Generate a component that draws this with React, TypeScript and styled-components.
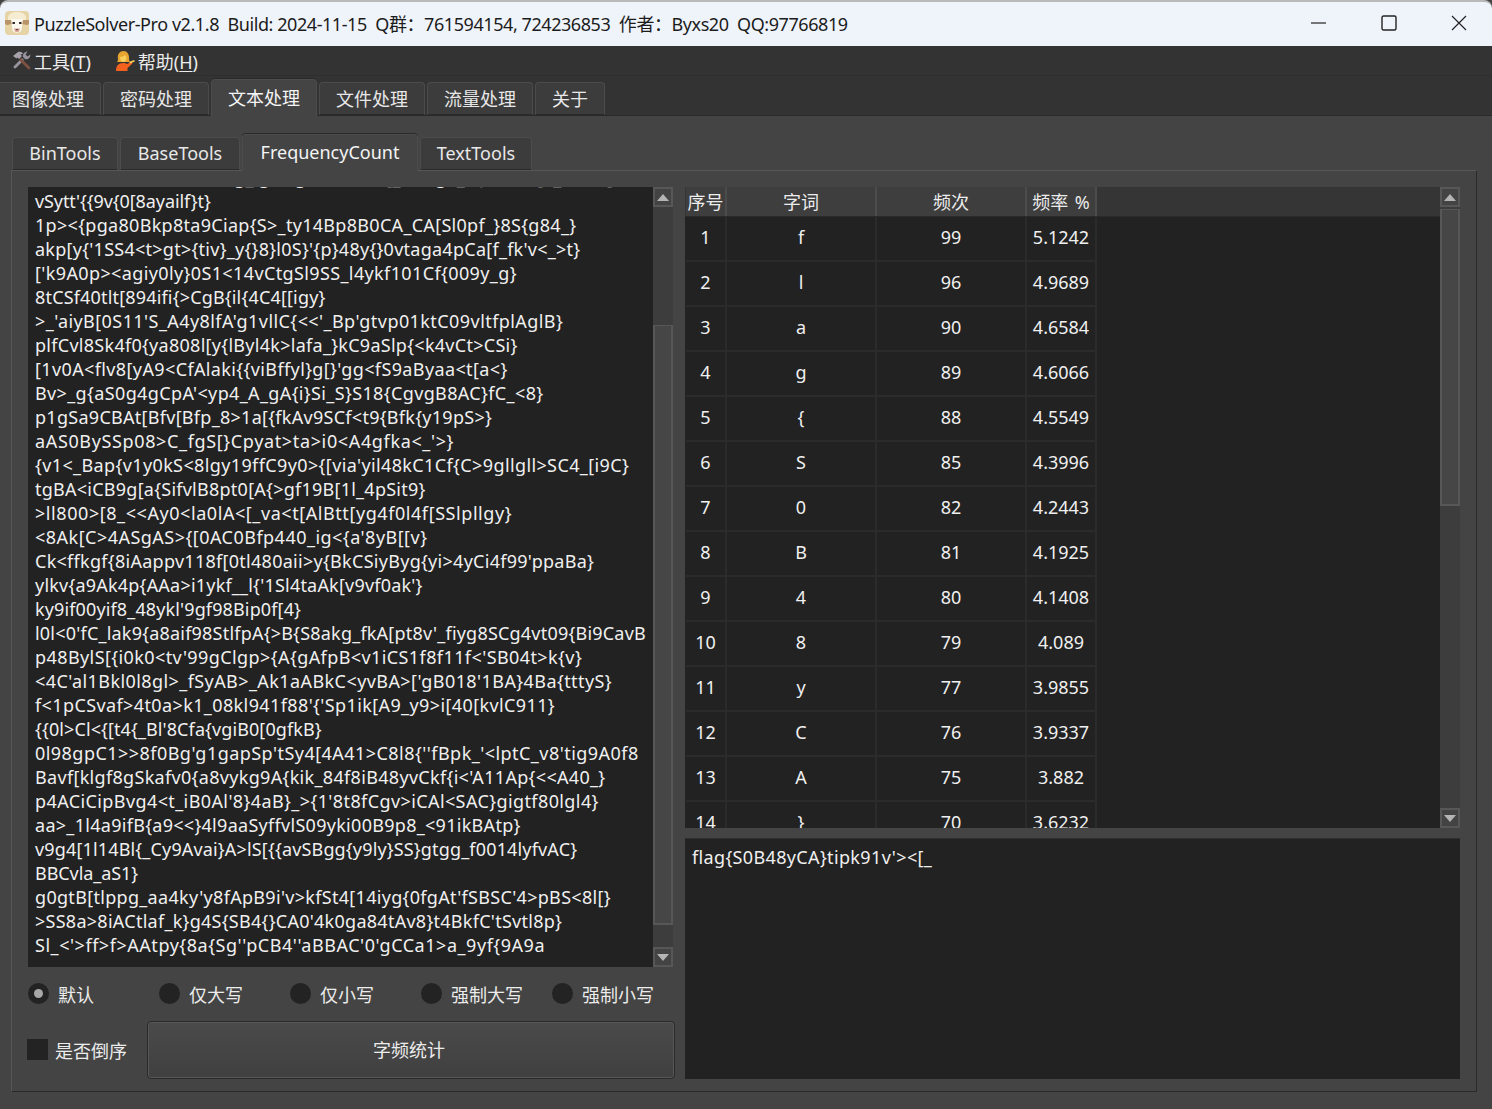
import React from "react";
import styled, { createGlobalStyle } from "styled-components";

const GlobalStyle = createGlobalStyle`
  html, body, #root {
    margin: 0;
    padding: 0;
    height: 100%;
    background: #444;
  }
  body {
    font-family: "Noto Sans", "Noto Sans CJK SC", sans-serif;
    font-size: 18px;
    color: #ececec;
  }
  * {
    box-sizing: border-box;
  }
`;

const Window = styled.div`
  width: 1492px;
  height: 1109px;
  display: flex;
  flex-direction: column;
  overflow: hidden;
  background: #444;
`;

const TitleBar = styled.div`
  height: 46px;
  flex: none;
  display: flex;
  align-items: center;
  padding: 0 25px 2px 5px;
  background: #eff4fb;
  border-top: 2px solid #b9b9b9;
  border-radius: 8px 8px 0 0;
  color: #1c1c1c;
`;

const TitleText = styled.span`
  margin-left: 5px;
  white-space: pre;
  letter-spacing: -0.43px;
  flex: 1;
`;

const WindowButtons = styled.div`
  display: flex;
  gap: 54px;
`;

const WindowButton = styled.button`
  width: 16px;
  height: 16px;
  border: 0;
  padding: 0;
  background: transparent;
  display: flex;
`;

const MenuBar = styled.div`
  height: 30px;
  flex: none;
  display: flex;
  align-items: center;
  gap: 25px;
  padding: 0 0 0 12px;
  background: #333;
  border-bottom: 1px solid #2f2f2f;
`;

const MenuItem = styled.div`
  display: flex;
  align-items: center;
  gap: 3px;
  white-space: nowrap;
  u {
    text-underline-offset: 2px;
  }
`;

const TabRow = styled.div<{ $height: number; $bg: string; $pad: number }>`
  height: ${(p) => p.$height}px;
  flex: none;
  display: flex;
  align-items: flex-end;
  gap: 2px;
  margin-left: ${(p) => p.$pad}px;
  background: ${(p) => p.$bg};
`;

const Tab = styled.div<{ $width: number; $active?: boolean; $tall: number; $short: number }>`
  width: ${(p) => p.$width}px;
  height: ${(p) => (p.$active ? p.$tall : p.$short)}px;
  flex: none;
  display: flex;
  align-items: center;
  justify-content: center;
  padding-bottom: 2px;
  margin-bottom: ${(p) => (p.$active ? -1 : 0)}px;
  position: relative;
  background: ${(p) => (p.$active ? "#444" : "#3c3c3c")};
  color: ${(p) => (p.$active ? "#f4f4f4" : "#e8e8e8")};
  border: 1px solid #4c4c4c;
  border-bottom: ${(p) => (p.$active ? "0" : "1px solid #2a2a2a")};
  border-radius: 4px 4px 0 0;
  box-shadow: ${(p) => (p.$active ? "0 -1px 0 #2a2a2a" : "none")};
  white-space: nowrap;
`;

const OuterPane = styled.div`
  flex: 1;
  display: flex;
  flex-direction: column;
  padding: 17px 15px 17px 11px;
  background: #444;
  border-top: 1px solid #2a2a2a;
`;

const InnerPane = styled.div`
  flex: 1;
  display: flex;
  gap: 10px;
  padding: 16px 16px 12px 16px;
  background: #444;
  border: 1px solid #575757;
  border-right-color: #2a2a2a;
  border-bottom-color: #2a2a2a;
  min-height: 0;
`;

const LeftColumn = styled.div`
  width: 647px;
  flex: none;
  display: flex;
  flex-direction: column;
`;

const RightColumn = styled.div`
  flex: 1;
  display: flex;
  flex-direction: column;
  gap: 10px;
  min-width: 0;
`;

const TextPanel = styled.div`
  height: 780px;
  flex: none;
  width: 645px;
  display: flex;
  background: #222;
`;

const TextBody = styled.div`
  flex: 1;
  min-width: 0;
  overflow: hidden;
  padding-left: 7px;
`;

const TextLines = styled.div`
  margin-top: -22px;
  line-height: 24px;
  color: #f0f0f0;
`;

const TextLine = styled.div<{ $spacing: number }>`
  height: 24px;
  white-space: pre;
  letter-spacing: ${(p) => p.$spacing}px;
`;

const ScrollBar = styled.div`
  width: 20px;
  flex: none;
  display: flex;
  flex-direction: column;
  gap: 1px;
  background: #3d3d3d;
`;

const ArrowButton = styled.div`
  height: 20px;
  flex: none;
  display: flex;
  align-items: center;
  justify-content: center;
  background: #434343;
  border: 2px solid #575757;
`;

const Track = styled.div`
  flex: 1;
  min-height: 0;
`;

const Thumb = styled.div<{ $top: number; $height: number }>`
  margin-top: ${(p) => p.$top}px;
  height: ${(p) => p.$height}px;
  background: #464646;
  border: 2px solid #575757;
  border-top-width: 1px;
`;

const OptionRow = styled.div`
  height: 54px;
  flex: none;
  display: grid;
  grid-template-columns: repeat(5, 131px);
  align-items: center;
  padding-bottom: 1px;
`;

const Option = styled.div`
  display: flex;
  align-items: center;
  gap: 8px;
  white-space: nowrap;
`;

const Radio = styled.span<{ $checked?: boolean }>`
  width: 21px;
  height: 21px;
  flex: none;
  margin-right: 1px;
  display: flex;
  align-items: center;
  justify-content: center;
  border-radius: 50%;
  background: #232323;
  &::after {
    content: "";
    width: 9px;
    height: 9px;
    border-radius: 50%;
    background: ${(p) => (p.$checked ? "#a8a8a8" : "transparent")};
  }
`;

const ActionRow = styled.div`
  flex: 1;
  display: flex;
  align-items: stretch;
  gap: 19px;
  margin-left: -1px;
`;

const CheckOption = styled.div`
  display: flex;
  align-items: center;
  gap: 7px;
  padding-bottom: 1px;
  white-space: nowrap;
  width: 101px;
  flex: none;
`;

const CheckBox = styled.span`
  width: 21px;
  height: 21px;
  flex: none;
  background: #232323;
`;

const ActionButton = styled.button`
  flex: 1;
  font: inherit;
  color: #ececec;
  padding: 0 4px 2px 0;
  background: linear-gradient(#4a4a4a, #404040);
  border: 1px solid #2a2a2a;
  border-radius: 4px;
  box-shadow: inset 0 0 0 1px #575757;
`;

const TableFrame = styled.div`
  height: 641px;
  flex: none;
  display: flex;
  background: #222;
`;

const TableBody = styled.div`
  flex: 1;
  min-width: 0;
  overflow: hidden;
  padding-left: 1px;
`;

const HeaderRow = styled.div`
  height: 30px;
  margin-left: -1px;
  padding-left: 1px;
  display: flex;
  background: #353535;
  border-bottom: 1px solid #2a2a2a;
`;

const HeaderCell = styled.div<{ $width: number }>`
  width: ${(p) => p.$width}px;
  flex: none;
  display: flex;
  align-items: center;
  justify-content: center;
  padding-bottom: 2px;
  background: #3e3e3e;
  border-right: 2px solid #4c4c4c;
  white-space: nowrap;
  word-spacing: 2px;
`;

const DataRow = styled.div`
  height: 45px;
  width: 411px;
  display: flex;
  border-bottom: 2px solid #2b2b2b;
`;

const DataCell = styled.div<{ $width: number }>`
  width: ${(p) => p.$width}px;
  flex: none;
  display: flex;
  align-items: center;
  justify-content: center;
  padding-bottom: 4px;
  border-right: 2px solid #2b2b2b;
  color: #f0f0f0;
`;

const ResultBox = styled.div`
  flex: 1;
  padding: 6px 7px;
  background: #222;
  border-top: 1px solid #2e2e2e;
  color: #f0f0f0;
  white-space: pre;
  letter-spacing: 0.35px;
`;

// the reference font has wider symbols, so each line carries its own tracking
const textLines: [string, number][] = [
  ["                                        g_ g     g                [_       g  _   }          [  _         [", 0.3],
  ["vSytt'{{9v{0[8ayailf}t}", -0.09],
  ["1p><{pga80Bkp8ta9Ciap{S>_ty14Bp8B0CA_CA[Sl0pf_}8S{g84_}", 0.3],
  ["akp[y{'1SS4<t>gt>{tiv}_y{}8}l0S}'{p}48y{}0vtaga4pCa[f_fk'v<_>t}", 0.26],
  ["['k9A0p><agiy0ly}0S1<14vCtgSl9SS_l4ykf101Cf{009y_g}", 0.38],
  ["8tCSf40tlt[894ifi{>CgB{il{4C4[[igy}", 0.17],
  [">_'aiyB[0S11'S_A4y8lfA'g1vllC{<<'_Bp'gtvp01ktC09vltfplAglB}", 0.43],
  ["plfCvl8Sk4f0{ya808l[y{lByl4k>lafa_}kC9aSlp{<k4vCt>CSi}", 0.28],
  ["[1v0A<flv8[yA9<CfAlaki{{viBffyl}g[}'gg<fS9aByaa<t[a<}", 0.38],
  ["Bv>_g{aS0g4gCpA'<yp4_A_gA{i}Si_S}S18{CgvgB8AC}fC_<8}", 0.37],
  ["p1gSa9CBAt[Bfv[Bfp_8>1a[{fkAv9SCf<t9{Bfk{y19pS>}", 0.28],
  ["aAS0BySSp08>C_fgS[}Cpyat>ta>i0<A4gfka<_'>}", 0.64],
  ["{v1<_Bap{v1y0kS<8lgy19ffC9y0>{[via'yil48kC1Cf{C>9gllgll>SC4_[i9C}", 0.38],
  ["tgBA<iCB9g[a{SifvlB8pt0[A{>gf19B[1l_4pSit9}", 0.25],
  [">ll800>[8_<<Ay0<la0lA<[_va<t[AlBtt[yg4f0l4f[SSlpllgy}", 0.57],
  ["<8Ak[C>4ASgAS>{[0AC0Bfp440_ig<{a'8yB[[v}", 0.48],
  ["Ck<ffkgf{8iAappv118f[0tl480aii>y{BkCSiyByg{yi>4yCi4f99'ppaBa}", 0.28],
  ["ylkv{a9Ak4p{AAa>i1ykf__l{'1Sl4taAk[v9vf0ak'}", 0.21],
  ["ky9if00yif8_48ykl'9gf98Bip0f[4}", 0.13],
  ["l0l<0'fC_lak9{a8aif98StlfpA{>B{S8akg_fkA[pt8v'_fiyg8SCg4vt09{Bi9CavB", 0.21],
  ["p48BylS[{i0k0<tv'99gClgp>{A{gAfpB<v1iCS1f8f11f<'SB04t>k{v}", 0.41],
  ["<4C'al1Bkl0l8gl>_fSyAB>_Ak1aABkC<yvBA>['gB018'1BA}4Ba{tttyS}", 0.42],
  ["f<1pCSvaf>4t0a>k1_08kl941f88'{'Sp1ik[A9_y9>i[40[kvlC911}", 0.39],
  ["{{0l>Cl<{[t4{_Bl'8Cfa{vgiB0[0gfkB}", 0.1],
  ["0l98gpC1>>8f0Bg'g1gapSp'tSy4[4A41>C8l8{''fBpk_'<lptC_v8'tig9A0f8", 0.46],
  ["Bavf[klgf8gSkafv0{a8vykg9A{kik_84f8iB48yvCkf{i<'A11Ap{<<A40_}", 0.32],
  ["p4ACiCipBvg4<t_iB0Al'8}4aB}_>{1'8t8fCgv>iCAl<SAC}gigtf80lgl4}", 0.4],
  ["aa>_1l4a9ifB{a9<<}4l9aaSyffvlS09yki00B9p8_<91ikBAtp}", 0.29],
  ["v9g4[1l14Bl{_Cy9Avai}A>lS[{{avSBgg{y9ly}SS}gtgg_f0014lyfvAC}", 0.16],
  ["BBCvla_aS1}", -0.07],
  ["g0gtB[tlppg_aa4ky'y8fApB9i'v>kfSt4[14iyg{0fgAt'fSBSC'4>pBS<8l[}", 0.31],
  [">SS8a>8iACtlaf_k}g4S{SB4{}CA0'4k0ga84tAv8}t4BkfC'tSvtl8p}", 0.27],
  ["Sl_<'>ff>f>AAtpy{8a{Sg''pCB4''aBBAC'0'gCCa1>a_9yf{9A9a", 0.54],
];

const rows = [
  ["1", "f", "99", "5.1242"],
  ["2", "l", "96", "4.9689"],
  ["3", "a", "90", "4.6584"],
  ["4", "g", "89", "4.6066"],
  ["5", "{", "88", "4.5549"],
  ["6", "S", "85", "4.3996"],
  ["7", "0", "82", "4.2443"],
  ["8", "B", "81", "4.1925"],
  ["9", "4", "80", "4.1408"],
  ["10", "8", "79", "4.089"],
  ["11", "y", "77", "3.9855"],
  ["12", "C", "76", "3.9337"],
  ["13", "A", "75", "3.882"],
  ["14", "}", "70", "3.6232"],
];

const columns = [
  { title: "序号", width: 41 },
  { title: "字词", width: 150 },
  { title: "频次", width: 150 },
  { title: "频率 %", width: 70 },
];

const mainTabs = [
  { label: "图像处理", width: 106 },
  { label: "密码处理", width: 106 },
  { label: "文本处理", width: 106, active: true },
  { label: "文件处理", width: 106 },
  { label: "流量处理", width: 106 },
  { label: "关于", width: 70 },
];

const toolTabs = [
  { label: "BinTools", width: 106 },
  { label: "BaseTools", width: 120 },
  { label: "FrequencyCount", width: 176, active: true },
  { label: "TextTools", width: 112 },
];

const options = ["默认", "仅大写", "仅小写", "强制大写", "强制小写"];

function SheepLogo() {
  return (
    <svg width="24" height="24" viewBox="0 0 24 24">
      <rect width="24" height="24" rx="4" fill="#e6d3a6" />
      <path d="M3 7c0-4 4-6 9-6s9 2 9 6v3H3z" fill="#f5ecd2" />
      <path d="M0 9l7 0 0 4-5 1c-1 0-2-1-2-2zM24 9l-7 0 0 4 5 1c1 0 2-1 2-2z" fill="#b89468" />
      <path d="M6 8h12l-1.500 11c-.5 3.500-8.500 3.500-9 0z" fill="#fbf8ef" />
      <rect x="7.500" y="11" width="2.400" height="2" fill="#2d2520" />
      <rect x="14.100" y="11" width="2.400" height="2" fill="#2d2520" />
      <path d="M9 17.500h6l-1 3c-1 .8-3 .8-4 0z" fill="#d9a596" />
      <path d="M10.500 18h3l-1.500 1.500z" fill="#5b3a33" />
    </svg>
  );
}

function ToolsIcon() {
  return (
    <svg width="19" height="19" viewBox="0 0 19 19">
      <path d="M2 15l8-8 2 2-8 8c-.6.6-1.400.6-2 0s-.6-1.400 0-2z" fill="#9a949e" />
      <path d="M11 6c-.5-2.500 1-5 4.500-5.500l-2 3 2 2 3-2c0 3.500-3 5.500-5.500 4.500z" fill="#9a949e" />
      <path d="M7 9l2-2 9 9c.6.6.6 1.400 0 2s-1.400.6-2 0z" fill="#7d5140" />
      <path d="M1 5l5-4c1-.5 3-.5 4 .5l1 1-1 1-1-.5-.5.5 1.500 1.500-3 3-1.500-1.500-1 1z" fill="#a9a2ad" />
    </svg>
  );
}

function PersonIcon() {
  return (
    <svg width="19" height="20" viewBox="0 0 19 20">
      <path d="M2 8c-1-5 2-8 5.500-8s6 3 5.500 8c0 2 1 3 1 3H1s1-1 1-3z" fill="#e8a530" />
      <path d="M4 6c2 0 4-1 5-2 1 1 1.500 2 1.500 3 0 2-1.500 4-3.200 4S4 9 4 6z" fill="#f8cf5c" />
      <path d="M0 20c0-5 2-8 7.500-8 1.500 0 2.500.5 3.500 1l4-2 1.500 1.500-5 4.500V20z" fill="#f2611d" />
      <path d="M13 11l5-2 1 1.200-4.500 2.300z" fill="#f8cf5c" />
    </svg>
  );
}

function Arrow({ down }: { down?: boolean }) {
  return (
    <svg width="12" height="7" viewBox="0 0 12 7">
      <path d={down ? "M0 0h12L6 7z" : "M0 7h12L6 0z"} fill="#b4b4b4" />
    </svg>
  );
}

export default function App() {
  return (
    <Window>
      <GlobalStyle />
      <TitleBar>
        <SheepLogo />
        <TitleText>
          {"PuzzleSolver-Pro v2.1.8  Build: 2024-11-15  Q群：761594154, 724236853  作者：Byxs20  QQ:97766819"}
        </TitleText>
        <WindowButtons>
          <WindowButton aria-label="minimize">
            <svg width="16" height="16" viewBox="0 0 16 16">
              <path d="M0 8h15" stroke="#222" strokeWidth="1.200" />
            </svg>
          </WindowButton>
          <WindowButton aria-label="maximize">
            <svg width="16" height="16" viewBox="0 0 16 16">
              <rect x="1" y="1" width="14" height="14" rx="1.500" fill="none" stroke="#222" strokeWidth="1.400" />
            </svg>
          </WindowButton>
          <WindowButton aria-label="close">
            <svg width="16" height="16" viewBox="0 0 16 16">
              <path d="M1 1l14 14M15 1L1 15" stroke="#222" strokeWidth="1.200" />
            </svg>
          </WindowButton>
        </WindowButtons>
      </TitleBar>
      <MenuBar>
        <MenuItem>
          <ToolsIcon />
          <span>
            工具(<u>T</u>)
          </span>
        </MenuItem>
        <MenuItem>
          <PersonIcon />
          <span>
            帮助(<u>H</u>)
          </span>
        </MenuItem>
      </MenuBar>
      <TabRow $height={39} $bg="#333" $pad={-5}>
        {mainTabs.map((t) => (
          <Tab key={t.label} $width={t.width} $active={t.active} $tall={37} $short={33}>
            {t.label}
          </Tab>
        ))}
      </TabRow>
      <OuterPane>
        <TabRow $height={37} $bg="#444" $pad={1}>
          {toolTabs.map((t) => (
            <Tab key={t.label} $width={t.width} $active={t.active} $tall={37} $short={33}>
              {t.label}
            </Tab>
          ))}
        </TabRow>
        <InnerPane>
          <LeftColumn>
            <TextPanel>
              <TextBody>
                <TextLines>
                  {textLines.map(([text, spacing], i) => (
                    <TextLine key={i} $spacing={spacing}>
                      {text}
                    </TextLine>
                  ))}
                </TextLines>
              </TextBody>
              <ScrollBar>
                <ArrowButton>
                  <Arrow />
                </ArrowButton>
                <Track>
                  <Thumb $top={117} $height={600} />
                </Track>
                <ArrowButton>
                  <Arrow down />
                </ArrowButton>
              </ScrollBar>
            </TextPanel>
            <OptionRow>
              {options.map((label, i) => (
                <Option key={label}>
                  <Radio $checked={i === 0} />
                  {label}
                </Option>
              ))}
            </OptionRow>
            <ActionRow>
              <CheckOption>
                <CheckBox />
                是否倒序
              </CheckOption>
              <ActionButton>字频统计</ActionButton>
            </ActionRow>
          </LeftColumn>
          <RightColumn>
            <TableFrame>
              <TableBody>
                <HeaderRow>
                  {columns.map((c) => (
                    <HeaderCell key={c.title} $width={c.width}>
                      {c.title}
                    </HeaderCell>
                  ))}
                </HeaderRow>
                {rows.map((row) => (
                  <DataRow key={row[0]}>
                    {row.map((value, i) => (
                      <DataCell key={i} $width={columns[i].width}>
                        {value}
                      </DataCell>
                    ))}
                  </DataRow>
                ))}
              </TableBody>
              <ScrollBar>
                <ArrowButton>
                  <Arrow />
                </ArrowButton>
                <Track>
                  <Thumb $top={1} $height={297} />
                </Track>
                <ArrowButton>
                  <Arrow down />
                </ArrowButton>
              </ScrollBar>
            </TableFrame>
            <ResultBox>{"flag{S0B48yCA}tipk91v'><[_"}</ResultBox>
          </RightColumn>
        </InnerPane>
      </OuterPane>
    </Window>
  );
}
